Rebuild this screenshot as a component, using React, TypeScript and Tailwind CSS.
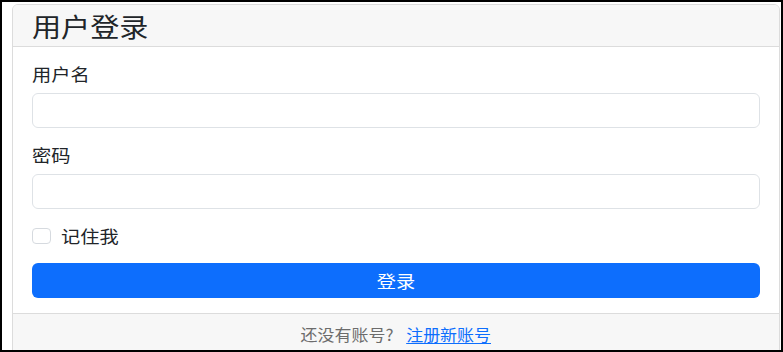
export default function App() {
  const font = { fontFamily: '"Noto Sans CJK SC", "Noto Sans", sans-serif' };
  return (
    <div
      className="w-[783px] h-[352px] overflow-hidden bg-white border-2 border-black pl-[10px] pr-[1px] pt-[2px] text-[#212529]"
      style={font}
    >
      <div className="h-[420px] border border-[#dcdcdc] rounded-[6px] overflow-hidden flex flex-col">
        <div className="h-[42px] bg-[#f7f7f7] border-b border-[#dcdcdc] px-[19px] flex items-center">
          <h3 className="inline-block origin-left scale-x-[1.12] text-[26px] leading-none font-normal">用户登录</h3>
        </div>
        <div className="px-[19px] pt-[15px] pb-[15px] bg-white">
          <label className="block w-fit origin-left scale-x-[1.13] text-[17px] leading-[24px]">用户名</label>
          <input
            type="text"
            className="mt-[7px] block w-full h-[35px] border border-[#dee2e6] rounded-[6px] bg-white px-3 outline-none"
          />
          <label className="mt-[15px] block w-fit origin-left scale-x-[1.13] text-[17px] leading-[24px]">密码</label>
          <input
            type="password"
            className="mt-[7px] block w-full h-[35px] border border-[#dee2e6] rounded-[6px] bg-white px-3 outline-none"
          />
          <div className="mt-[15px] flex items-center h-[24px]">
            <span className="w-[19px] h-[16px] border border-[#d6dadf] rounded-[4px] bg-white" />
            <span className="ml-[10px] inline-block origin-left scale-x-[1.13] text-[17px] leading-[24px]">记住我</span>
          </div>
          <button className="mt-[15px] w-full h-[35px] rounded-[6px] bg-[#0d6efd] text-white text-[17px] flex items-center justify-center">
            <span className="inline-block scale-x-[1.13]">登录</span>
          </button>
        </div>
        <div className="flex-1 bg-[#f7f7f7] border-t border-[#dcdcdc] pt-[8px] text-[16px] leading-[24px] flex justify-center">
          <div className="scale-x-[1.06]">
            <span className="text-[#6c6c6c]">还没有账号?</span>
            <a className="ml-[12px] text-[#0d6efd] underline underline-offset-2">注册新账号</a>
          </div>
        </div>
      </div>
    </div>
  );
}
